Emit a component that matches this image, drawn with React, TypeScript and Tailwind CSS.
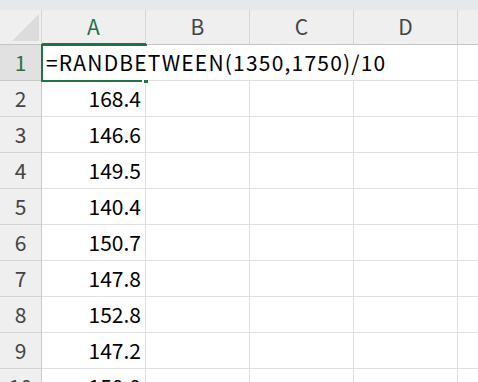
import React from "react";

const cols = ["A", "B", "C", "D"];
const values = ["168.4", "146.6", "149.5", "140.4", "150.7", "147.8", "152.8", "147.2", "150.0"];

const font = { fontFamily: '"Noto Sans CJK JP", "Noto Sans", sans-serif' };

export default function App() {
  return (
    <div className="relative w-[478px] h-[382px] overflow-hidden bg-white" style={font}>
      <div className="h-[10px] bg-[#e6e9ec]" />
      <div className="grid grid-cols-[42px_104px_104px_104px_104px_1fr]">
        {/* header row */}
        <div className="relative h-[35px] bg-[#efefef] border-b border-[#c4c4c4] border-r border-r-[#d4d4d4]">
          <svg className="absolute left-0 top-0" width="42" height="34">
            <polygon points="12,31 39,4 39,31" fill="#dcdcdc" />
          </svg>
        </div>
        {cols.map((c, i) => (
          <div
            key={c}
            className={
              "h-[35px] flex items-center justify-center bg-[#efefef] border-b border-r border-b-[#c4c4c4] border-r-[#d4d4d4] text-[21px] " +
              (i === 0 ? "text-[#217346]" : "text-[#444]")
            }
          >
            {c}
          </div>
        ))}
        <div className="h-[35px] bg-[#efefef] border-b border-[#c4c4c4]" />

        {/* row 1 */}
        <div className="h-[36px] flex items-center justify-center bg-[#e1e1e1] border-b border-r border-b-[#c8c8c8] border-r-[#c8c8c8] text-[21px] text-[#217346]">
          1
        </div>
        <div className="col-span-4 h-[36px] flex items-center pl-[4px] border-b border-r border-[#e1e1e1] text-[21px] tracking-[1.2px] text-black whitespace-nowrap">
          =RANDBETWEEN(1350,1750)/10
        </div>
        <div className="h-[36px] border-b border-[#e1e1e1]" />

        {values.map((v, idx) => (
          <React.Fragment key={idx}>
            <div className="h-[36px] flex items-center justify-center bg-[#efefef] border-b border-r border-b-[#d4d4d4] border-r-[#c8c8c8] text-[21px] text-[#444]">
              {idx + 2}
            </div>
            <div className="h-[36px] flex items-center justify-end pr-[4px] border-b border-r border-[#e1e1e1] text-[21px] text-black">
              {v}
            </div>
            <div className="h-[36px] border-b border-r border-[#e1e1e1]" />
            <div className="h-[36px] border-b border-r border-[#e1e1e1]" />
            <div className="h-[36px] border-b border-r border-[#e1e1e1]" />
            <div className="h-[36px] border-b border-[#e1e1e1]" />
          </React.Fragment>
        ))}
      </div>

      {/* column A header underline */}
      <div className="absolute left-[42px] top-[43px] w-[104px] h-[2px] bg-[#217346]" />
      {/* selection box */}
      <div className="absolute left-[41px] top-[44px] w-[106px] h-[2px] bg-[#217346]" />
      <div className="absolute left-[41px] top-[44px] w-[2px] h-[38px] bg-[#217346]" />
      <div className="absolute left-[41px] top-[80px] w-[101px] h-[2px] bg-[#217346]" />
      <div className="absolute left-[143px] top-[79px] w-[6px] h-[5px] bg-[#217346] border border-white" />
    </div>
  );
}
